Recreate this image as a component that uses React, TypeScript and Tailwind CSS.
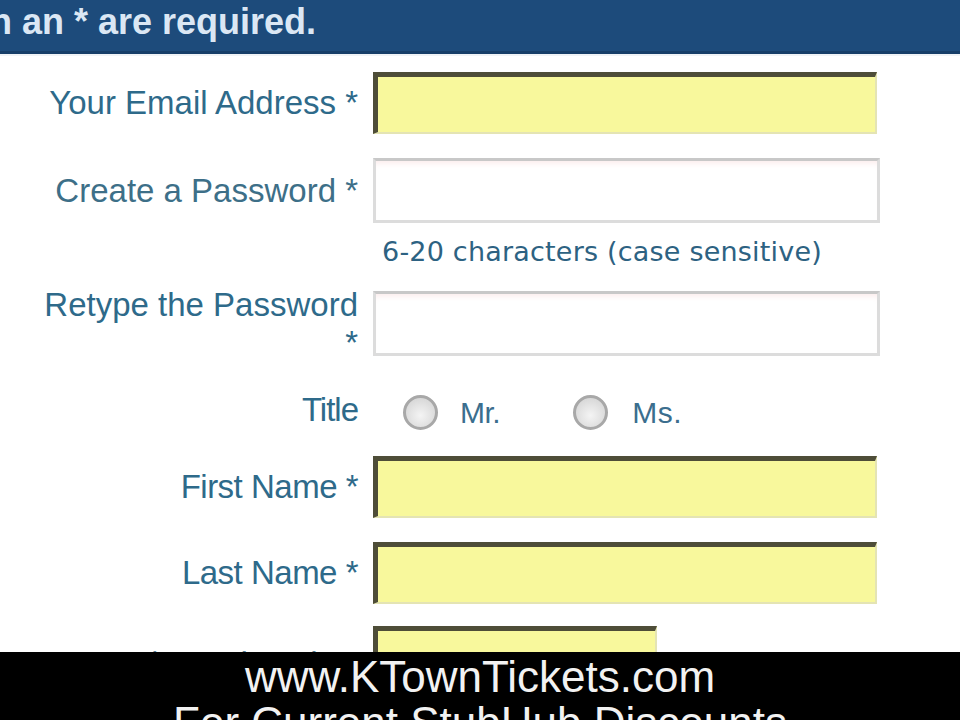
import React from 'react'

const labelCls = "text-[33px] leading-[36px] text-[#2e6a8a] text-right whitespace-nowrap"

const YellowInput = ({ width = 'w-[504px]' }: { width?: string }) => (
    <div className={`${width} h-[62px] bg-[#f8f89c] border-t-[5px] border-l-[5px] border-r-2 border-b-2 border-t-[#4e4d38] border-l-[#4e4d38] border-r-[#e4e4b4] border-b-[#e4e4b4]`} />
)

const WhiteInput = () => (
    <div className="w-[507px] h-[65px] bg-white border-[3px] border-[#dcdcdc] border-t-[#c8c8c8] shadow-[inset_0_6px_6px_-4px_#fbeaea]" />
)

const Radio = () => (
    <div className="w-[35px] h-[35px] rounded-full border-[3px] border-[#a8a8a8] bg-[radial-gradient(circle_at_50%_60%,#f4f4f4,#cfcfcf)]" />
)

const App = () => {
    return (
        <div className="relative w-[960px] h-[720px] overflow-hidden bg-white" style={{ fontFamily: '"Liberation Sans", Arial, sans-serif' }}>
            {/* header bar */}
            <div className="h-[54px] bg-[#1d4b7b] border-b-[3px] border-[#173e68] overflow-hidden">
                <div className="ml-[-10px] pt-[1px] text-[36px] leading-[42px] font-bold text-[#dbe7f4] whitespace-nowrap">
                    n an * are required.
                </div>
            </div>
            <div className="h-[2px] bg-[#f0f3f6]" />

            <div className="pt-[16px] flex flex-col">
                {/* email */}
                <div className="flex items-center gap-[15px]">
                    <div className={`w-[358px] ${labelCls}`}>Your Email Address *</div>
                    <YellowInput />
                </div>

                {/* password */}
                <div className="flex items-center gap-[15px] mt-[24px]">
                    <div className={`w-[358px] ${labelCls} text-[#3d6f88]`}>Create a Password *</div>
                    <WhiteInput />
                </div>
                <div className="pl-[382px] mt-[12px] text-[27px] leading-[34px] tracking-[0.2px] text-[#2d6282] whitespace-nowrap" style={{ fontFamily: '"DejaVu Sans", Verdana, sans-serif' }}>
                    6-20 characters (case sensitive)
                </div>

                {/* retype */}
                <div className="flex items-start gap-[15px] mt-[22px]">
                    <div className={`w-[358px] ${labelCls} -mt-[5px] leading-[38px]`}>
                        Retype the Password<br />*
                    </div>
                    <WhiteInput />
                </div>

                {/* title */}
                <div className="flex items-center gap-[15px] mt-[22px]">
                    <div className={`w-[358px] ${labelCls} text-[29px] tracking-[-1px]`}>Title</div>
                    <div className="flex items-center pl-[30px] pt-[6px]">
                        <Radio />
                        <span className="ml-[22px] text-[30px] text-[#3b6e8e] tracking-[-0.5px]">Mr.</span>
                        <div className="ml-[73px]"><Radio /></div>
                        <span className="ml-[24px] text-[30px] text-[#3b6e8e] tracking-[0.5px]">Ms.</span>
                    </div>
                </div>

                {/* first name */}
                <div className="flex items-center gap-[15px] mt-[21px]">
                    <div className={`w-[358px] ${labelCls} tracking-[-0.5px]`}>First Name *</div>
                    <YellowInput />
                </div>

                {/* last name */}
                <div className="flex items-center gap-[15px] mt-[24px]">
                    <div className={`w-[358px] ${labelCls} tracking-[-0.5px]`}>Last Name *</div>
                    <YellowInput />
                </div>

                {/* zip */}
                <div className="flex items-start gap-[15px] mt-[22px]">
                    <div className={`w-[358px] ${labelCls} pt-[20px] text-[#5b7f94]`}>ZIP/Postal Code *</div>
                    <YellowInput width="w-[284px]" />
                </div>
            </div>

            {/* caption overlay */}
            <div className="absolute left-0 right-0 bottom-0 h-[68px] bg-black flex flex-col items-center overflow-hidden">
                <div className="pt-[2px] text-[44px] leading-[46px] text-[#f2f2f2] whitespace-nowrap">www.KTownTickets.com</div>
                <div className="text-[44px] leading-[46px] text-[#f2f2f2] whitespace-nowrap">For Current StubHub Discounts</div>
            </div>
        </div>
    )
}

export default App
